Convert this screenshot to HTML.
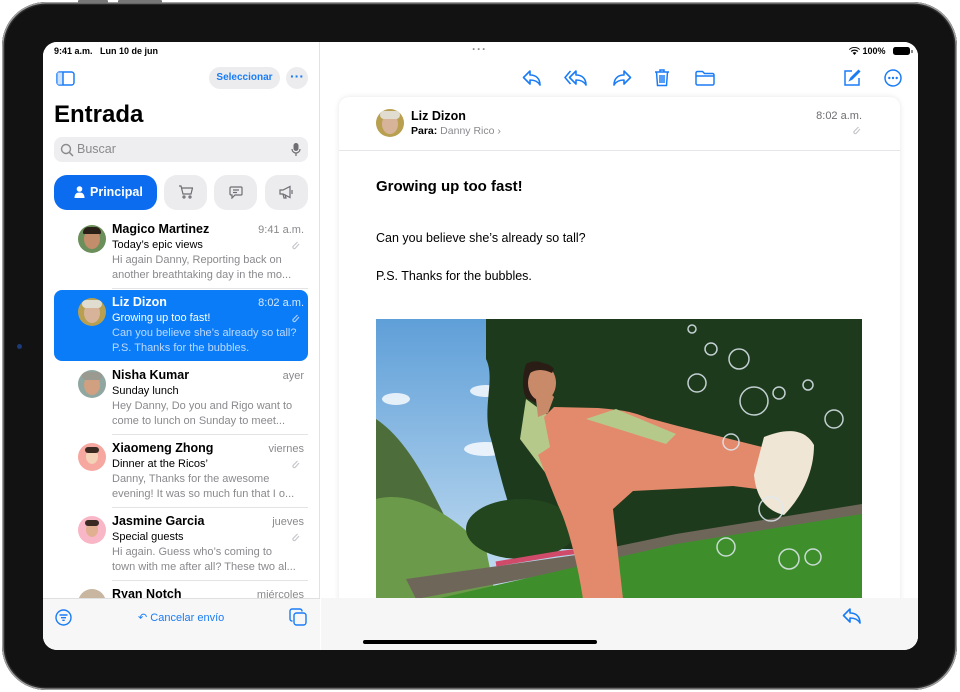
<!DOCTYPE html>
<html><head><meta charset="utf-8">
<style>
*{box-sizing:border-box;margin:0;padding:0}
body{width:960px;height:692px;background:#fff;font-family:"Liberation Sans",sans-serif;position:relative;overflow:hidden}
.frame{position:absolute;left:2px;top:2px;width:955px;height:688px;border-radius:44px;background:#121212;box-shadow:0 0 0 1.5px #a0a0a0 inset, 0 0 0 3px #2a2a2a inset}
.screen{position:absolute;left:43px;top:42px;width:875px;height:608px;border-radius:14px;background:#fff;overflow:hidden}
.abs{position:absolute}
.side{position:absolute;left:0;top:0;width:277px;height:608px;background:#fff;border-right:1px solid #e2e2e2}
.t{position:absolute;white-space:nowrap}
.row .name{font-size:12.5px;font-weight:bold;color:#000}
.row .sub{font-size:11px;color:#000}
.row .pre{font-size:11px;color:#8a8a8e;line-height:14.5px}
.row .time{font-size:11px;color:#8a8a8e;text-align:right}
.av{position:absolute;width:28px;height:28px;border-radius:50%;overflow:hidden}
.sep{position:absolute;left:69px;width:196px;height:1px;background:#e4e4e6}
.blue{color:#1a7cf5}
</style></head><body>
<div class="frame"></div>
<div class="abs" style="left:78px;top:0;width:30px;height:3px;background:#777;border-radius:1px"></div>
<div class="abs" style="left:118px;top:0;width:44px;height:3px;background:#777;border-radius:1px"></div>
<div class="screen">
 <div class="side">
  <div class="t" style="left:11px;top:4px;font-size:9px;color:#000;font-weight:bold">9:41 a.m.&nbsp;&nbsp; Lun 10 de jun</div>
  <svg class="abs" style="left:13px;top:29px" width="19" height="15" viewBox="0 0 19 15"><rect x="1" y="1" width="17" height="13" rx="2.5" fill="none" stroke="#1a7cf5" stroke-width="1.5"/><rect x="1.5" y="1.5" width="5" height="12" fill="#cfe2fd"/><line x1="7" y1="1" x2="7" y2="14" stroke="#1a7cf5" stroke-width="1.5"/></svg>
  <div class="abs" style="left:166px;top:25px;width:71px;height:22px;border-radius:11px;background:#ececee;font-size:10px;color:#1a7cf5;text-align:center;line-height:22px;font-weight:bold">Seleccionar</div>
  <div class="abs" style="left:243px;top:25px;width:22px;height:22px;border-radius:11px;background:#ececee;color:#1a7cf5;text-align:center;line-height:18px;font-size:14px;font-weight:bold">···</div>
  <div class="t" style="left:11px;top:59px;font-size:24px;font-weight:bold;color:#000">Entrada</div>
  <div class="abs" style="left:11px;top:95px;width:254px;height:25px;border-radius:8px;background:#eeeef0"></div>
  <svg class="abs" style="left:17px;top:101px" width="14" height="14" viewBox="0 0 14 14"><circle cx="6" cy="6" r="4.5" fill="none" stroke="#8a8a8e" stroke-width="1.4"/><line x1="9.3" y1="9.3" x2="13" y2="13" stroke="#8a8a8e" stroke-width="1.5"/></svg>
  <div class="t" style="left:34px;top:100px;font-size:12.5px;color:#8a8a8e">Buscar</div>
  <svg class="abs" style="left:248px;top:100px" width="10" height="15" viewBox="0 0 10 15"><rect x="2.5" y="1" width="5" height="8" rx="2.5" fill="#6e6e73"/><path d="M1 7a4 4 0 0 0 8 0M5 11v3" fill="none" stroke="#6e6e73" stroke-width="1.2"/></svg>
  <div class="abs" style="left:11px;top:133px;width:103px;height:35px;border-radius:13px;background:#0b6cf0"></div>
  <svg class="abs" style="left:31px;top:144px" width="11" height="12" viewBox="0 0 11 12"><circle cx="5.5" cy="3" r="2.8" fill="#fff"/><path d="M0.5 12c0-4 2-5.5 5-5.5s5 1.5 5 5.5z" fill="#fff"/></svg>
  <div class="t" style="left:47px;top:143px;font-size:12.5px;font-weight:bold;color:#fff">Principal</div>
  <div class="abs" style="left:121px;top:133px;width:43px;height:35px;border-radius:13px;background:#ececee"></div>
  <div class="abs" style="left:171px;top:133px;width:43px;height:35px;border-radius:13px;background:#ececee"></div>
  <div class="abs" style="left:222px;top:133px;width:43px;height:35px;border-radius:13px;background:#ececee"></div>
  <svg class="abs" style="left:135px;top:143px" width="15" height="14" viewBox="0 0 15 14" fill="none" stroke="#6e6e73" stroke-width="1.2"><path d="M1 1h2l2 8h8l1.5-6H4"/><circle cx="6" cy="12" r="1"/><circle cx="12" cy="12" r="1"/></svg>
  <svg class="abs" style="left:186px;top:144px" width="14" height="13" viewBox="0 0 14 13" fill="none" stroke="#6e6e73" stroke-width="1.2"><path d="M2 1h10a1 1 0 0 1 1 1v6a1 1 0 0 1-1 1H6l-3 3V9H2a1 1 0 0 1-1-1V2a1 1 0 0 1 1-1z"/><path d="M4 4h6M4 6.5h4"/></svg>
  <svg class="abs" style="left:236px;top:143px" width="15" height="14" viewBox="0 0 15 14" fill="none" stroke="#6e6e73" stroke-width="1.2"><path d="M1 5v4h3l7 3.5V1.5L4 5z"/><path d="M4 9l1 4h2l-1-3.5"/><path d="M13 5v4"/></svg>

  <div class="abs" style="left:11px;top:248px;width:254px;height:71px;border-radius:8px;background:#0b7cf8"></div>
  <div class="row">
   <div class="av" style="left:35px;top:183px;background:#6b8f5a"><div class="abs" style="left:6px;top:4px;width:16px;height:20px;border-radius:50%;background:#c28d6a"></div><div class="abs" style="left:5px;top:2px;width:18px;height:7px;border-radius:8px 8px 2px 2px;background:#2a2018"></div></div>
   <div class="t name" style="left:69px;top:180px">Magico Martinez</div><div class="t time" style="right:15px;top:182px">9:41 a.m.</div>
   <div class="t sub" style="left:69px;top:197px">Today’s epic views</div>
   <div class="t pre" style="left:69px;top:211px">Hi again Danny, Reporting back on<br>another breathtaking day in the mo...</div>
   <div class="sep" style="top:246px"></div>
  </div>
  <div class="row">
   <div class="av" style="left:35px;top:256px;background:#b8a050"><div class="abs" style="left:6px;top:5px;width:16px;height:20px;border-radius:50%;background:#d7b39a"></div><div class="abs" style="left:4px;top:2px;width:20px;height:8px;border-radius:9px;background:#e0dccf"></div></div>
   <div class="t name" style="left:69px;top:253px;color:#fff">Liz Dizon</div><div class="t time" style="right:15px;top:255px;color:#d6e8ff">8:02 a.m.</div>
   <div class="t sub" style="left:69px;top:270px;color:#fff">Growing up too fast!</div>
   <div class="t pre" style="left:69px;top:284px;color:#bcd9ff">Can you believe she’s already so tall?<br>P.S. Thanks for the bubbles.</div>
  </div>
  <div class="row">
   <div class="av" style="left:35px;top:328px;background:#8fa7a0"><div class="abs" style="left:6px;top:5px;width:16px;height:20px;border-radius:50%;background:#d0a080"></div><div class="abs" style="left:4px;top:2px;width:20px;height:8px;border-radius:9px;background:#9a9a90"></div></div>
   <div class="t name" style="left:69px;top:326px">Nisha Kumar</div><div class="t time" style="right:15px;top:328px">ayer</div>
   <div class="t sub" style="left:69px;top:343px">Sunday lunch</div>
   <div class="t pre" style="left:69px;top:357px">Hey Danny, Do you and Rigo want to<br>come to lunch on Sunday to meet...</div>
   <div class="sep" style="top:392px"></div>
  </div>
  <div class="row">
   <div class="av" style="left:35px;top:401px;background:#f6a8a0"><div class="abs" style="left:8px;top:6px;width:12px;height:15px;border-radius:50%;background:#f3d2b8"></div><div class="abs" style="left:7px;top:4px;width:14px;height:6px;border-radius:7px;background:#3a2a22"></div></div>
   <div class="t name" style="left:69px;top:399px">Xiaomeng Zhong</div><div class="t time" style="right:15px;top:401px">viernes</div>
   <div class="t sub" style="left:69px;top:416px">Dinner at the Ricos’</div>
   <div class="t pre" style="left:69px;top:430px">Danny, Thanks for the awesome<br>evening! It was so much fun that I o...</div>
   <div class="sep" style="top:465px"></div>
  </div>
  <div class="row">
   <div class="av" style="left:35px;top:474px;background:#f8b6c6"><div class="abs" style="left:8px;top:6px;width:12px;height:15px;border-radius:50%;background:#e0b090"></div><div class="abs" style="left:7px;top:4px;width:14px;height:6px;border-radius:7px;background:#3a2a22"></div></div>
   <div class="t name" style="left:69px;top:472px">Jasmine Garcia</div><div class="t time" style="right:15px;top:474px">jueves</div>
   <div class="t sub" style="left:69px;top:489px">Special guests</div>
   <div class="t pre" style="left:69px;top:503px">Hi again. Guess who’s coming to<br>town with me after all? These two al...</div>
   <div class="sep" style="top:538px"></div>
  </div>
  <div class="row">
   <div class="av" style="left:35px;top:547px;background:#c9b6a0"></div>
   <div class="t name" style="left:69px;top:545px">Ryan Notch</div><div class="t time" style="right:15px;top:547px">miércoles</div>
  </div>
  <svg class="abs" style="left:248px;top:199px" width="10" height="10" viewBox="0 0 10 10"><path d="M8 3L4 7.5a1.5 1.5 0 0 1-2-2L6.5 1" fill="none" stroke="#c7c7cc" stroke-width="1.2"/></svg>
  <svg class="abs" style="left:248px;top:272px" width="10" height="10" viewBox="0 0 10 10"><path d="M8 3L4 7.5a1.5 1.5 0 0 1-2-2L6.5 1" fill="none" stroke="#a9ccff" stroke-width="1.2"/></svg>
  <svg class="abs" style="left:248px;top:418px" width="10" height="10" viewBox="0 0 10 10"><path d="M8 3L4 7.5a1.5 1.5 0 0 1-2-2L6.5 1" fill="none" stroke="#c7c7cc" stroke-width="1.2"/></svg>
  <svg class="abs" style="left:248px;top:491px" width="10" height="10" viewBox="0 0 10 10"><path d="M8 3L4 7.5a1.5 1.5 0 0 1-2-2L6.5 1" fill="none" stroke="#c7c7cc" stroke-width="1.2"/></svg>
  <div class="abs" style="left:0;top:556px;width:277px;height:52px;background:#f7f7f7;border-top:1px solid #e0e0e0"></div>
  <svg class="abs" style="left:12px;top:567px" width="17" height="17" viewBox="0 0 17 17" fill="none" stroke="#1a7cf5" stroke-width="1.4"><circle cx="8.5" cy="8.5" r="7.5"/><path d="M4.5 6h8M6 8.7h5M7.3 11.3h2.4"/></svg>
  <div class="t blue" style="left:95px;top:569px;font-size:11px">↶ Cancelar envío</div>
  <svg class="abs" style="left:246px;top:566px" width="18" height="18" viewBox="0 0 18 18" fill="none" stroke="#1a7cf5" stroke-width="1.4"><rect x="5" y="5" width="12" height="12" rx="2.5"/><path d="M13 3.5V3a2 2 0 0 0-2-2H3a2 2 0 0 0-2 2v8a2 2 0 0 0 2 2h.5"/></svg>
 </div>

 <div class="abs" style="left:278px;top:0;width:597px;height:608px;background:#fff"></div>
 <div class="t" style="left:429px;top:0px;font-size:12px;color:#8a8a8e;font-weight:bold;letter-spacing:1px">···</div>
 <div class="t" style="left:806px;top:4px;font-size:9px;font-weight:bold;color:#000">
  <svg width="11" height="8" viewBox="0 0 11 8" style="vertical-align:-1px"><path d="M5.5 8L3.6 5.9a2.7 2.7 0 0 1 3.8 0z M2.6 4.9a4.2 4.2 0 0 1 5.8 0l.9-.9a5.5 5.5 0 0 0-7.6 0z M0.6 2.9a7 7 0 0 1 9.8 0l.6-.7A8 8 0 0 0 0 2.2z" fill="#000"/></svg> 100%</div>
 <div class="abs" style="left:850px;top:5px;width:17px;height:8px;border-radius:2.5px;background:#000"></div>
 <div class="abs" style="left:868px;top:7.5px;width:1.5px;height:3px;background:#888"></div>
 <svg class="abs" style="left:479px;top:27px" width="20" height="18" viewBox="0 0 20 18" fill="none" stroke="#1a7cf5" stroke-width="1.6" stroke-linejoin="round"><path d="M8 2L1.5 8.5 8 15v-4c5 0 8 1.5 10 5 0-6-3.5-10-10-10z"/></svg>
 <svg class="abs" style="left:521px;top:27px" width="24" height="18" viewBox="0 0 24 18" fill="none" stroke="#1a7cf5" stroke-width="1.6" stroke-linejoin="round"><path d="M6.5 2L1 8.5 6.5 15"/><path d="M12 2L5.5 8.5 12 15v-4c5 0 8 1.5 10 5 0-6-3.5-10-10-10z"/></svg>
 <svg class="abs" style="left:569px;top:27px" width="20" height="18" viewBox="0 0 20 18" fill="none" stroke="#1a7cf5" stroke-width="1.6" stroke-linejoin="round"><path d="M12 2l6.5 6.5L12 15v-4c-5 0-8 1.5-10 5 0-6 3.5-10 10-10z"/></svg>
 <svg class="abs" style="left:611px;top:26px" width="16" height="19" viewBox="0 0 16 19" fill="none" stroke="#1a7cf5" stroke-width="1.5"><path d="M1 4h14M6 4V2h4v2M2.5 4l1 13.5h9L13.5 4M6 7v8M8 7v8M10 7v8"/></svg>
 <svg class="abs" style="left:652px;top:28px" width="20" height="16" viewBox="0 0 20 16" fill="none" stroke="#1a7cf5" stroke-width="1.5"><path d="M1 3a1.5 1.5 0 0 1 1.5-1.5h5l2 2h8A1.5 1.5 0 0 1 19 5v8.5a1.5 1.5 0 0 1-1.5 1.5h-15A1.5 1.5 0 0 1 1 13.5z M1 6h18"/></svg>
 <svg class="abs" style="left:800px;top:27px" width="18" height="18" viewBox="0 0 18 18" fill="none" stroke="#1a7cf5" stroke-width="1.5"><path d="M9 2H2v14h14V9"/><path d="M15.5 1.5l1 1L9 10l-2 1 1-2z" fill="#1a7cf5"/></svg>
 <svg class="abs" style="left:841px;top:27px" width="18" height="18" viewBox="0 0 18 18"><circle cx="9" cy="9" r="8" fill="none" stroke="#1a7cf5" stroke-width="1.5"/><circle cx="5.3" cy="9" r="1.2" fill="#1a7cf5"/><circle cx="9" cy="9" r="1.2" fill="#1a7cf5"/><circle cx="12.7" cy="9" r="1.2" fill="#1a7cf5"/></svg>
 <div class="abs" style="left:296px;top:55px;width:561px;height:520px;background:#fff;border-radius:10px;box-shadow:0 0 6px rgba(0,0,0,0.10)"></div>
 <div class="av" style="left:333px;top:67px;background:#b8a050"><div class="abs" style="left:6px;top:5px;width:16px;height:20px;border-radius:50%;background:#d7b39a"></div><div class="abs" style="left:4px;top:2px;width:20px;height:8px;border-radius:9px;background:#e0dccf"></div></div>
 <div class="t" style="left:368px;top:67px;font-size:12.5px;font-weight:bold">Liz Dizon</div>
 <div class="t" style="left:368px;top:83px;font-size:10.5px;color:#8a8a8e"><b style="color:#000">Para:</b> Danny Rico ›</div>
 <div class="t" style="right:56px;top:68px;font-size:11px;color:#6e6e73">8:02 a.m.</div>
 <svg class="abs" style="left:809px;top:84px" width="10" height="10" viewBox="0 0 10 10"><path d="M8 3L4 7.5a1.5 1.5 0 0 1-2-2L6.5 1" fill="none" stroke="#c7c7cc" stroke-width="1.2"/></svg>
 <div class="abs" style="left:296px;top:108px;width:561px;height:1px;background:#e6e6e8"></div>
 <div class="t" style="left:333px;top:136px;font-size:15px;font-weight:bold">Growing up too fast!</div>
 <div class="t" style="left:333px;top:189px;font-size:12.5px">Can you believe she’s already so tall?</div>
 <div class="t" style="left:333px;top:227px;font-size:12.5px">P.S. Thanks for the bubbles.</div>
 <svg class="abs" style="left:333px;top:277px" width="486" height="280" viewBox="0 0 486 280">
  <defs><linearGradient id="sky" x1="0" y1="0" x2="0" y2="1"><stop offset="0" stop-color="#5f9fd8"/><stop offset="1" stop-color="#c8e0f2"/></linearGradient>
  <linearGradient id="gr" x1="0" y1="0" x2="0" y2="1"><stop offset="0" stop-color="#3e8a2a"/><stop offset="1" stop-color="#2f7a22"/></linearGradient></defs>
  <rect width="486" height="280" fill="url(#sky)"/>
  <ellipse cx="20" cy="80" rx="14" ry="6" fill="#fff" opacity="0.8"/><ellipse cx="110" cy="72" rx="16" ry="6" fill="#fff" opacity="0.8"/><ellipse cx="110" cy="130" rx="22" ry="7" fill="#fff" opacity="0.8"/>
  <path d="M110 0H486V230H150C135 200 125 160 115 120 105 90 120 60 110 40z" fill="#1e3a1c"/>
  <path d="M0 100C30 120 50 160 70 200L90 280H0z" fill="#4d6e3a"/>
  <path d="M0 180C40 170 80 200 110 230L120 280H0z" fill="#6a9a4a"/>
  <ellipse cx="145" cy="210" rx="55" ry="30" fill="#23461f"/>
  <path d="M30 260L200 236 300 215 486 185 486 200 300 230 200 250 40 280z" fill="#6f665a"/>
  <path d="M120 245l60-10 40-5" stroke="#d04a6a" stroke-width="5" fill="none"/>
  <path d="M60 280L300 225 486 195V280z" fill="#3f8e2c"/>
  <!-- girl -->
  <path d="M150 45c6-4 18-4 22 4l-2 40-20-10c-4-8-4-22 0-34z" fill="#2a1d15"/>
  <ellipse cx="166" cy="64" rx="14" ry="18" fill="#c98a6a"/>
  <path d="M152 50c6-8 20-8 26 0l-2 4c-8-4-16-4-22 0z" fill="#2a1d15"/>
  <path d="M150 80l-6 40 30 40 10-55z" fill="#b5c98a"/>
  <path d="M178 88l-10 10 6 30-12 8 20 50c10 20 20 60 25 94h40l-10-90 20-18 100-5 40 5 5-40-100-25-30-8c-20-8-30-8-50-10z" fill="#e38a6c"/>
  <path d="M210 100l80 25 10-10-60-25z" fill="#b5c98a"/>
  <path d="M160 80l10-10 8 8-6 16-10 4z" fill="#c98a6a"/>
  <path d="M388 118c20-8 40-10 50 8 0 30-15 55-30 70-20-5-28-20-30-40z" fill="#f0e6d6"/>
  <g fill="none" stroke="#e0eaf2" stroke-width="1.5" opacity="0.85">
   <circle cx="335" cy="30" r="6"/><circle cx="363" cy="40" r="10"/><circle cx="378" cy="82" r="14"/><circle cx="321" cy="64" r="9"/><circle cx="403" cy="74" r="6"/><circle cx="432" cy="66" r="5"/><circle cx="458" cy="100" r="9"/><circle cx="355" cy="123" r="8"/><circle cx="395" cy="190" r="12"/><circle cx="413" cy="240" r="10"/><circle cx="437" cy="238" r="8"/><circle cx="316" cy="10" r="4"/><circle cx="350" cy="228" r="9"/></g>
 </svg>
 <div class="abs" style="left:278px;top:556px;width:597px;height:52px;background:#f6f6f6"></div>
 <svg class="abs" style="left:799px;top:565px" width="20" height="18" viewBox="0 0 20 18" fill="none" stroke="#1a7cf5" stroke-width="1.6" stroke-linejoin="round"><path d="M8 2L1.5 8.5 8 15v-4c5 0 8 1.5 10 5 0-6-3.5-10-10-10z"/></svg>
 <div class="abs" style="left:320px;top:598px;width:234px;height:4px;border-radius:2px;background:#000"></div>
</div>
<div class="abs" style="left:17px;top:344px;width:5px;height:5px;border-radius:50%;background:#1a3a7a"></div>
</body></html>
